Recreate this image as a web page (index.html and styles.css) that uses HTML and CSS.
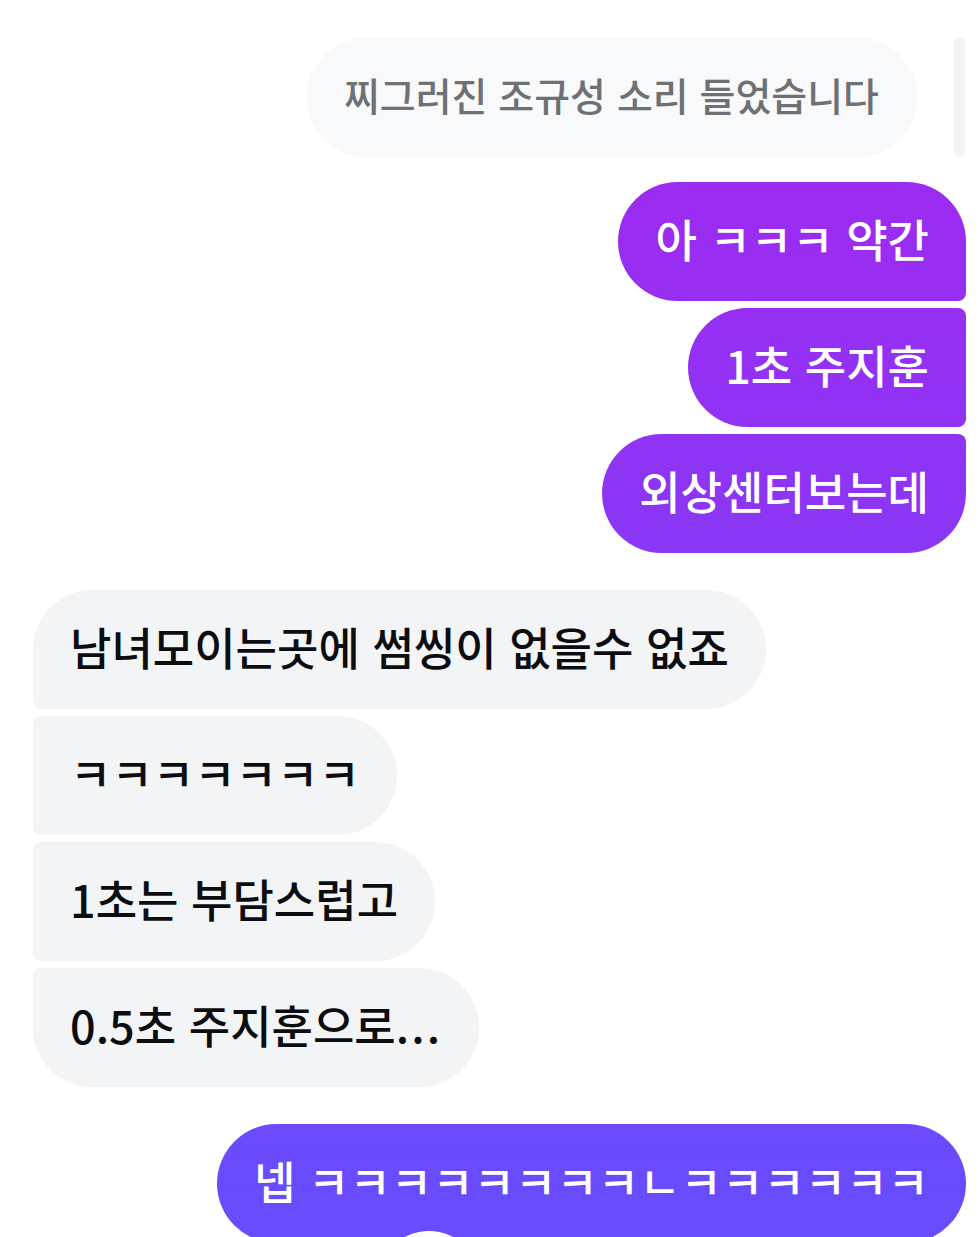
FILE: index.html
```html
<!DOCTYPE html>
<html lang="ko">
<head>
    <meta charset="UTF-8">
    <meta name="viewport" content="width=device-width, initial-scale=1.0">
    <title>DM</title>
    <link rel="stylesheet" href="styles.css">
</head>
<body>
    <div class="thread">
        <div class="reply-row">
            <div class="quoted">찌그러진 조규성 소리 들었습니다</div>
            <div class="reply-bar"></div>
        </div>

        <div class="group mine">
            <div class="bubble first">아 ㅋㅋㅋ 약간</div>
            <div class="bubble middle">1초 주지훈</div>
            <div class="bubble last">외상센터보는데</div>
        </div>

        <div class="group theirs">
            <div class="bubble first">남녀모이는곳에 썸씽이 없을수 없죠</div>
            <div class="bubble middle">ㅋㅋㅋㅋㅋㅋㅋ</div>
            <div class="bubble middle">1초는 부담스럽고</div>
            <div class="bubble last">0.5초 주지훈으로<span class="dots">...</span></div>
        </div>

        <div class="group mine">
            <div class="bubble first">넵 ㅋㅋㅋㅋㅋㅋㅋㅋㄴㅋㅋㅋㅋㅋㅋ<span class="reaction"></span></div>
        </div>
    </div>
</body>
</html>
```

FILE: styles.css
```css
:root {
    --bubble-h: 119px;
    --pill: 60px;
    --tight: 8px;
    --gray-bubble: #f3f4f6;
    --font-family: 'Noto Sans CJK KR', 'Noto Sans', sans-serif;
}

* {
    margin: 0;
    padding: 0;
    box-sizing: border-box;
}

body {
    font-family: var(--font-family);
    background: #ffffff;
    height: 100vh;
    overflow: hidden;
}

.thread {
    display: flex;
    flex-direction: column;
    gap: 37px;
    padding: 38px 12px 0 33px;
}

.reply-row {
    display: flex;
    justify-content: flex-end;
    gap: 37px;
    margin-bottom: -12px;
}

.quoted {
    height: var(--bubble-h);
    line-height: 113px;
    padding: 0 38px 6px 37px;
    border-radius: var(--pill);
    background: #f8f9fa;
    color: #6f7073;
    font-size: 39px;
    font-weight: 500;
    white-space: nowrap;
}

.reply-bar {
    width: 11px;
    margin-right: 1px;
    border-radius: 6px;
    background: #f3f4f6;
}

.group {
    display: flex;
    flex-direction: column;
    gap: 7px;
}

.group.mine {
    align-items: flex-end;
}

.group.theirs {
    align-items: flex-start;
}

.bubble {
    position: relative;
    height: var(--bubble-h);
    line-height: 113px;
    padding: 0 37px 6px;
    font-size: 45px;
    font-weight: 500;
    white-space: nowrap;
    border-radius: var(--pill);
}

.dots {
    letter-spacing: 2px;
}

.mine .bubble {
    color: #ffffff;
    background: linear-gradient(180deg, #a625ef 0%, #674dff 100%) fixed;
}

.theirs .bubble {
    color: #0c0d10;
    background: var(--gray-bubble);
}

.mine .first { border-bottom-right-radius: var(--tight); }
.mine .middle { border-top-right-radius: var(--tight); border-bottom-right-radius: var(--tight); }
.mine .last { border-top-right-radius: var(--tight); }
.mine .first:last-child { border-bottom-right-radius: var(--pill); }

.theirs .first { border-bottom-left-radius: var(--tight); }
.theirs .middle { border-top-left-radius: var(--tight); border-bottom-left-radius: var(--tight); }
.theirs .last { border-top-left-radius: var(--tight); }

.reaction {
    position: absolute;
    left: 160px;
    top: 107px;
    width: 104px;
    height: 104px;
    border-radius: 50%;
    background: #ffffff;
}
```
